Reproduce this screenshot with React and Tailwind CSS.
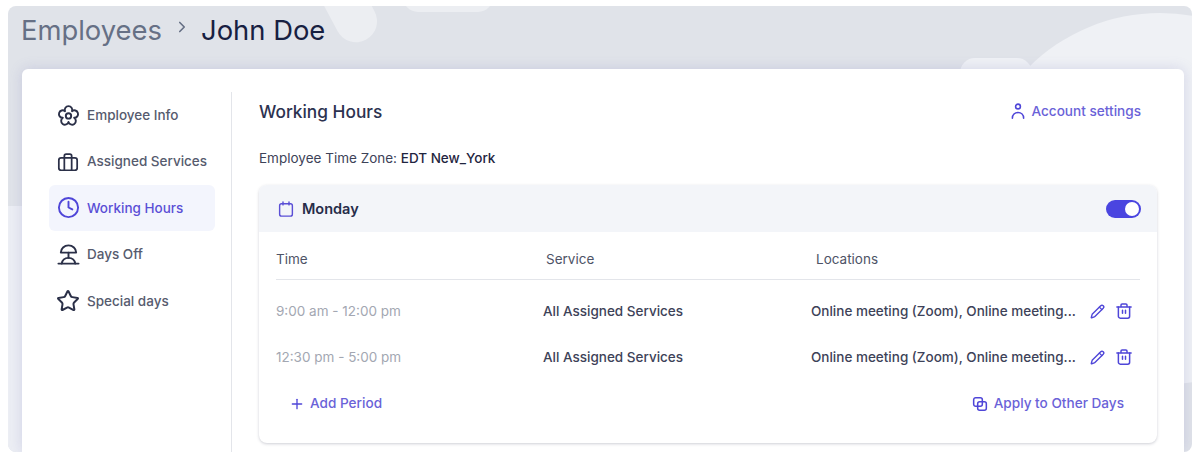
import { ChevronRight, Clock, Pencil, Plus, Star } from 'lucide-react';

const font = "font-['Inter','Liberation_Sans',sans-serif]";

const FlowerGear = ({ className }) => (
  <svg viewBox="0 0 24 24" fill="none" stroke="currentColor" strokeWidth="2" strokeLinejoin="round" className={className}>
    <path d="M8.36 7.48A3.9 3.9 0 1 1 15.64 7.48A3.9 3.9 0 1 1 17.9 14.42A3.9 3.9 0 1 1 12 18.7A3.9 3.9 0 1 1 6.1 14.42A3.9 3.9 0 1 1 8.36 7.48Z" />
    <circle cx="12" cy="12.5" r="2.8" />
  </svg>
);

const Briefcase = ({ className }) => (
  <svg viewBox="0 0 24 24" fill="none" stroke="currentColor" strokeWidth="1.9" strokeLinejoin="round" className={className}>
    <rect x="2" y="7.5" width="20" height="13.5" rx="2.5" />
    <path d="M8 21V5.5A2 2 0 0 1 10 3.5h4a2 2 0 0 1 2 2V21" />
  </svg>
);

const BeachIsland = ({ className }) => (
  <svg viewBox="0 0 24 24" fill="none" stroke="currentColor" strokeWidth="2" strokeLinecap="round" strokeLinejoin="round" className={className}>
    <path d="M4 10A8 7.5 0 0 1 20 10Z" />
    <path d="M12 10V15.5" />
    <path d="M5 21.5c.5-3.500 3.200-6 7-6s6.500 2.500 7 6" />
    <path d="M1.500 21.500h21" />
  </svg>
);

const CalendarIcon = ({ className }) => (
  <svg viewBox="0 0 24 24" fill="none" stroke="currentColor" strokeWidth="1.9" strokeLinecap="round" className={className}>
    <rect x="3.5" y="5" width="17" height="16.5" rx="2.5" />
    <path d="M8 2.5v4M16 2.5v4" />
  </svg>
);

const PersonIcon = ({ className }) => (
  <svg viewBox="0 0 24 24" fill="none" stroke="currentColor" strokeWidth="2.1" strokeLinecap="round" className={className}>
    <circle cx="12" cy="6" r="3.2" />
    <path d="M4.5 21.500c0-4.500 3.200-7.500 7.500-7.500s7.500 3 7.500 7.500" />
  </svg>
);

const TrashIcon = ({ className }) => (
  <svg viewBox="0 0 24 24" fill="none" stroke="currentColor" strokeWidth="2" strokeLinecap="round" strokeLinejoin="round" className={className}>
    <path d="M2.5 6.500h19" />
    <path d="M8 6V4a1.500 1.500 0 0 1 1.500-1.500h5A1.500 1.500 0 0 1 16 4v2" />
    <path d="M4.500 6.500V19a2.500 2.500 0 0 0 2.500 2.500h10a2.500 2.500 0 0 0 2.500-2.500V6.500" />
    <path d="M10 11v4M14 11v4" />
  </svg>
);

const CopyIcon = ({ className }) => (
  <svg viewBox="0 0 24 24" fill="none" stroke="currentColor" strokeWidth="2.3" className={className}>
    <rect x="2.500" y="2.500" width="13" height="13" rx="3" />
    <rect x="8.500" y="8.500" width="13" height="13" rx="3" />
  </svg>
);

const navItems = [
  { label: 'Employee Info', icon: FlowerGear, size: 'h-[23px] w-[23px]' },
  { label: 'Assigned Services', icon: Briefcase, size: 'h-[22px] w-[22px]' },
  { label: 'Working Hours', icon: Clock, size: 'h-[23px] w-[23px]', active: true },
  { label: 'Days Off', icon: BeachIsland, size: 'h-[23px] w-[23px]' },
  { label: 'Special days', icon: Star, size: 'h-[24px] w-[24px]' },
];

const periods = ['9:00 am - 12:00 pm', '12:30 pm - 5:00 pm'];

const App = () => {
  return (
    <div className={`${font} h-[457px] w-[1195px] overflow-hidden bg-white pl-[8px] pr-[3px] pt-[6px]`}>
      <div className="relative h-[446px] overflow-hidden rounded-lg bg-[#e0e3e9]">
        {/* background blobs */}
        <div className="absolute left-[320px] top-[-34px] h-[72px] w-[42px] -rotate-[28deg] rounded-full bg-[#eceef2]" />
        <div className="absolute left-[395px] top-[-24px] h-[30px] w-[90px] rounded-full bg-[#eceef2]" />
        <div className="absolute left-[966px] top-[7px] h-[372px] w-[372px] rounded-full bg-[#eff1f5]" />
        <div className="absolute left-[952px] top-[52px] h-[30px] w-[72px] rounded-full bg-[#eff1f5]" />
        <div className="absolute bottom-0 left-0 top-[200px] w-[14px] bg-[#eceef4]" />

        <div className="relative flex h-[63px] items-start pl-[13px] pt-[5px] text-[27.4px] leading-[38px]">
          <span className="text-[#667085]">Employees</span>
          <ChevronRight className="ml-[11px] mt-[7px] h-[18px] w-[18px] text-[#667085]" strokeWidth={2.2} />
          <span className="ml-[10px] text-[#172041]">John Doe</span>
        </div>

        <div className="relative ml-[14px] mr-[8px] flex h-[383px] rounded-t-md bg-white pt-[23px] shadow-[0_0_14px_rgba(100,100,180,0.2)]">
          <aside className="w-[210px] shrink-0 border-r border-[#e3e5ea] pl-[27px] pr-[16px]">
            {navItems.map(({ label, icon: Icon, size, active }) => (
              <div
                key={label}
                className={`flex h-[46.4px] items-center rounded-md pl-[8px] ${
                  active ? 'bg-[#f3f5fd] text-[#5a4fd6]' : 'text-[#565b6e]'
                }`}
              >
                <span className="flex w-[22px] shrink-0 justify-center">
                  <Icon
                    className={`${size} shrink-0 ${active ? 'text-[#4f46d8]' : 'text-[#2b3048]'}`}
                    strokeWidth={2}
                  />
                </span>
                <span className="ml-[8px] whitespace-nowrap text-[13.5px] font-medium">{label}</span>
              </div>
            ))}
          </aside>

          <main className="flex-1 pl-[27px] pr-[27px]">
            <div className="flex h-[39px] items-center justify-between pr-[16px]">
              <h1 className="text-[17.3px] font-medium text-[#2c3250]">Working Hours</h1>
              <a className="flex items-center text-[13.6px] font-medium text-[#6a62d8]">
                <PersonIcon className="mr-[4px] h-[18px] w-[18px] text-[#4f46d8]" />
                Account settings
              </a>
            </div>

            <p className="mt-[17px] h-[20px] text-[13.5px] leading-[20px] text-[#3d4258]">
              Employee Time Zone: <span className="font-medium text-[#1f2540]">EDT New_York</span>
            </p>

            <section className="mt-[17px] h-[258px] overflow-hidden rounded-lg bg-white shadow-[0_1px_3px_rgba(60,65,90,0.25)]">
              <div className="flex h-[47px] items-center justify-between bg-[#f3f5f9] pl-[18px] pr-[16px]">
                <div className="flex items-center">
                  <CalendarIcon className="h-[18px] w-[18px] text-[#5a4fd6]" />
                  <span className="ml-[7px] text-[14.5px] font-semibold text-[#262c49]">Monday</span>
                </div>
                <div className="flex h-[18px] w-[35px] items-center justify-end rounded-full bg-[#4a45e0] pr-[2px]">
                  <div className="h-[14px] w-[14px] rounded-full bg-white" />
                </div>
              </div>

              <div className="px-[17px]">
                <div className="grid h-[48px] grid-cols-[270px_270px_1fr] items-center border-b border-[#e3e5ea] pt-[8px] text-[13.5px] text-[#4e5366]">
                  <span>Time</span>
                  <span>Service</span>
                  <span>Locations</span>
                </div>

                <div className="pt-[8px]">
                  {periods.map((period) => (
                    <div key={period} className="grid h-[46.3px] grid-cols-[267px_268px_1fr] items-center text-[13.5px]">
                      <span className="text-[#a3a7b2]">{period}</span>
                      <span className="font-medium text-[#3d4258]">All Assigned Services</span>
                      <div className="flex items-center">
                        <span className="w-[266px] whitespace-nowrap font-medium text-[#3d4258]">
                          Online meeting (Zoom), Online meeting...
                        </span>
                        <Pencil className="ml-[13px] h-[15px] w-[15px] text-[#4f46d8]" strokeWidth={2.2} />
                        <TrashIcon className="ml-[10px] h-[18px] w-[18px] text-[#4f46d8]" />
                      </div>
                    </div>
                  ))}
                </div>

                <div className="flex h-[46px] items-center justify-between pl-[13px] pr-[16px] text-[13.6px] font-medium text-[#6a62d8]">
                  <span className="flex items-center">
                    <Plus className="mr-[5px] h-[16px] w-[16px] text-[#4f46d8]" strokeWidth={2} />
                    Add Period
                  </span>
                  <span className="flex items-center">
                    <CopyIcon className="mr-[6px] h-[16px] w-[16px] text-[#4f46d8]" />
                    Apply to Other Days
                  </span>
                </div>
              </div>
            </section>
          </main>
        </div>
      </div>
    </div>
  );
};

export default App;
